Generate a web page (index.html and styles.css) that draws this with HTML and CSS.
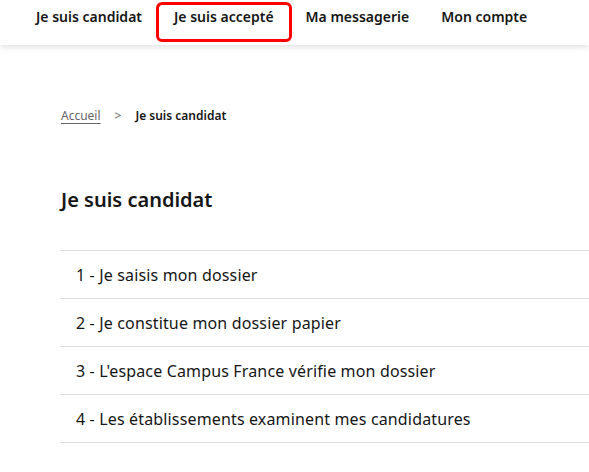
FILE: index.html
```html
<!DOCTYPE html>
<html lang="fr">
<head>
<meta charset="utf-8">
<title>Je suis candidat</title>
<link rel="stylesheet" href="styles.css">
</head>
<body>
<header class="header">
  <nav class="nav">
    <a class="nav-link" href="#">Je suis candidat</a>
    <a class="nav-link nav-link--active" href="#">Je suis accepté</a>
    <a class="nav-link" href="#">Ma messagerie</a>
    <a class="nav-link" href="#">Mon compte</a>
  </nav>
</header>
<main class="main">
  <div class="breadcrumb">
    <a class="breadcrumb-link" href="#">Accueil</a>
    <span class="breadcrumb-sep">&gt;</span>
    <span class="breadcrumb-current">Je suis candidat</span>
  </div>
  <h1 class="title">Je suis candidat</h1>
  <ul class="steps">
    <li class="step">1 - Je saisis mon dossier</li>
    <li class="step">2 - Je constitue mon dossier papier</li>
    <li class="step">3 - L'espace Campus France vérifie mon dossier</li>
    <li class="step">4 - Les établissements examinent mes candidatures</li>
  </ul>
</main>
</body>
</html>
```
FILE: styles.css
```css
* { box-sizing: border-box; }
html, body { margin: 0; padding: 0; background: #fff; }
body {
  font-family: "Noto Sans", "Lato", sans-serif;
  color: #161616;
  overflow: hidden;
}
.header {
  height: 45px;
  background: #fff;
  box-shadow: 0 2px 6px rgba(0,0,0,0.12);
  position: relative;
  z-index: 1;
}
.nav {
  display: flex;
  align-items: flex-start;
  height: 45px;
  padding: 2px 0 0 20px;
}
.nav-link {
  display: block;
  height: 40px;
  padding: 2px 15px 0;
  border: 3px solid transparent;
  border-radius: 6px;
  margin: 0 -2px;
  font-size: 14px;
  line-height: 19px;
  font-weight: 600;
  color: #161616;
  text-decoration: none;
}
.nav-link--active {
  border-color: #ff0000;
}
.main {
  padding: 60px 0 0 61px;
}
.breadcrumb {
  display: flex;
  align-items: center;
  font-size: 12px;
  height: 20px;
}
.breadcrumb-link {
  color: #666;
  text-decoration: underline;
  text-underline-offset: 3px;
}
.breadcrumb-sep {
  color: #666;
  margin: 0 14px 0 14px;
}
.breadcrumb-current {
  font-weight: 600;
}
.title {
  margin: 61px 0 0;
  font-size: 20px;
  font-weight: 600;
  line-height: 28px;
}
.steps {
  list-style: none;
  margin: 36px 0 0 -1px;
  padding: 0;
  border-top: 1px solid #dddddd;
}
.step {
  height: 48px;
  display: flex;
  align-items: center;
  padding-left: 16px;
  font-size: 16px;
  letter-spacing: 0.15px;
  border-bottom: 1px solid #dddddd;
}
```
